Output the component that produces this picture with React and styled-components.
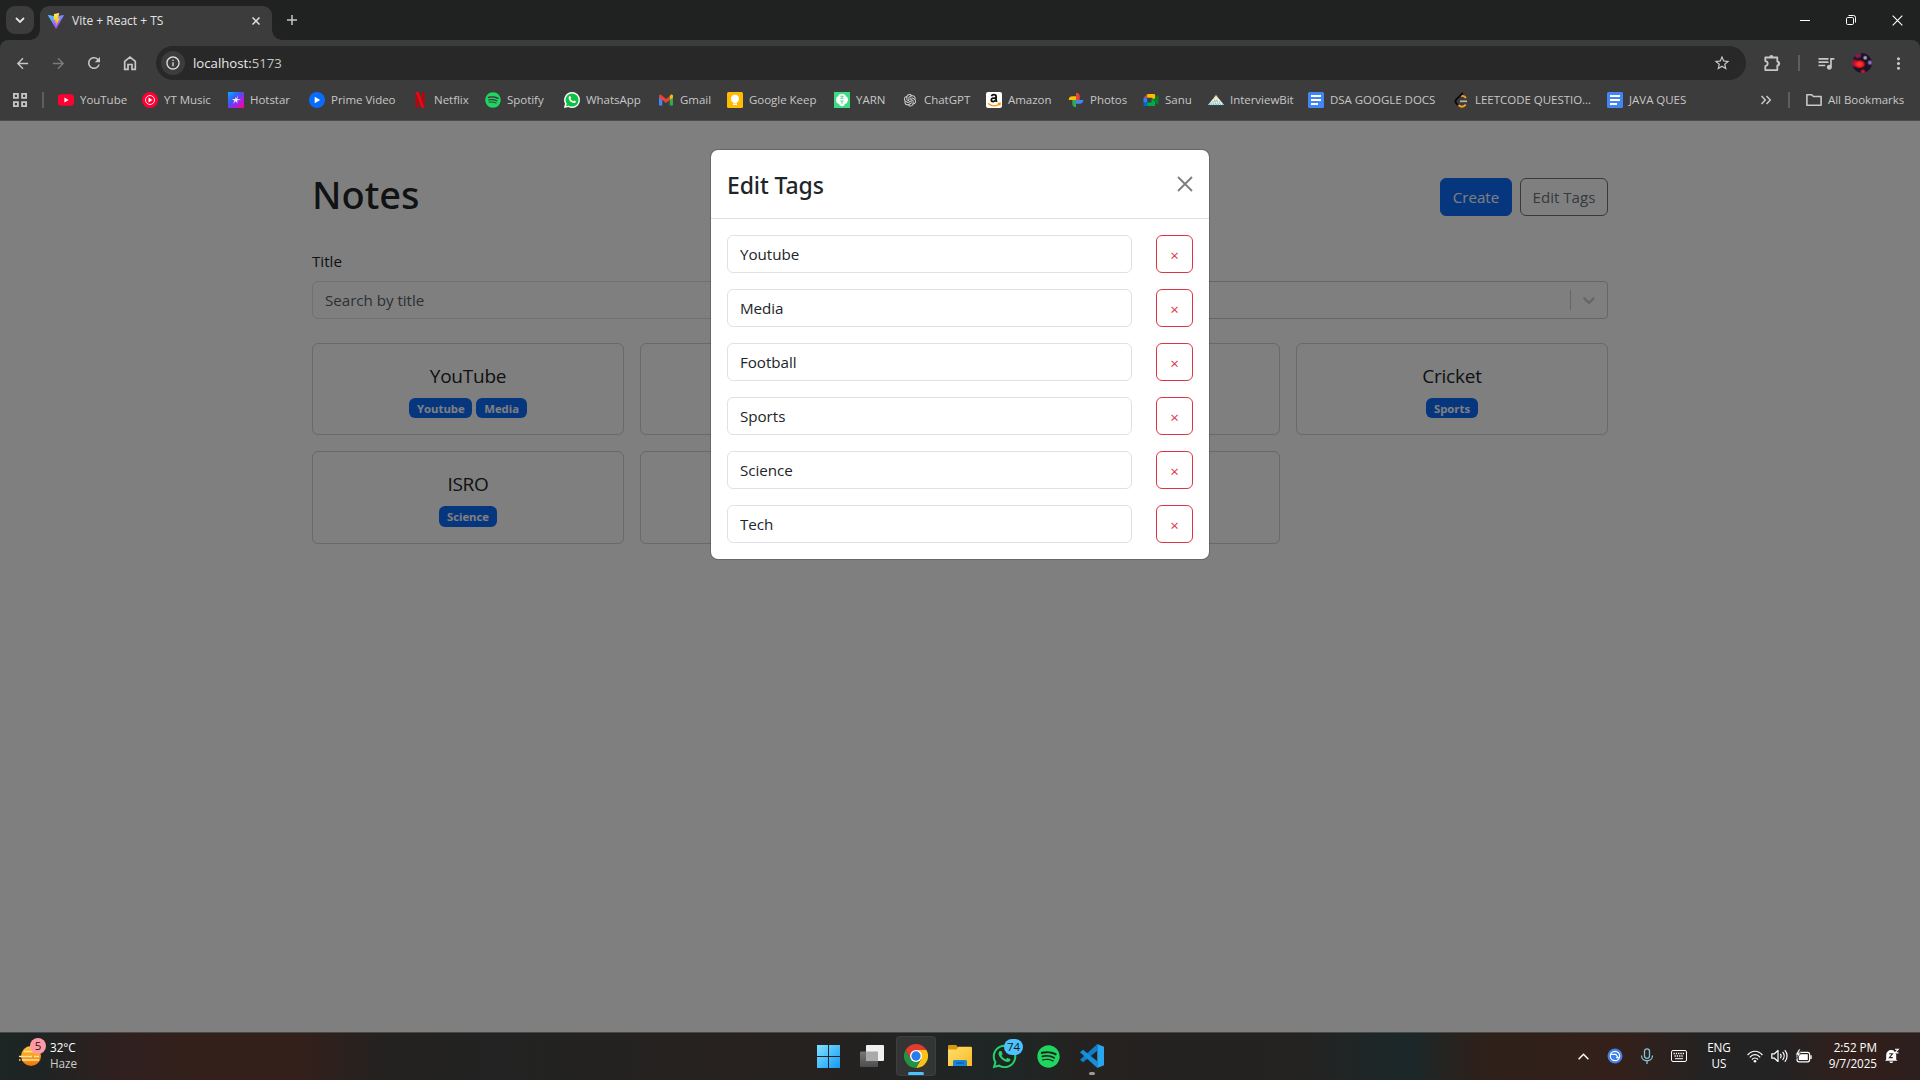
import React from 'react';
import styled, { createGlobalStyle, css } from 'styled-components';
import {
  MdArrowBack, MdArrowForward, MdRefresh, MdInfoOutline, MdStarBorder,
  MdQueueMusic, MdMoreVert,
} from 'react-icons/md';
import { FaSpotify, FaWhatsapp } from 'react-icons/fa';
import { AiOutlineOpenAI } from 'react-icons/ai';

const GlobalStyle = createGlobalStyle`
  * { box-sizing: border-box; }
  html, body { margin: 0; padding: 0; background: #202221; }
  body {
    overflow: hidden;
    font-family: "Open Sans", "Noto Sans", sans-serif;
    color: #212529;
  }
  svg { display: block; flex: none; }
  button, input { font-family: inherit; margin: 0; }
`;

const Screen = styled.div`
  width: 1920px;
  height: 1080px;
  display: flex;
  flex-direction: column;
  overflow: hidden;
`;

/* ---------- browser chrome ---------- */

const TabStrip = styled.header`
  height: 40px;
  flex: none;
  display: flex;
  align-items: flex-end;
  background: #202221;
  padding-left: 6px;
`;

const TabSearch = styled.button`
  width: 28px;
  height: 28px;
  margin-bottom: 6px;
  border: 0;
  padding: 0;
  border-radius: 9px;
  background: #3c3c3c;
  display: grid;
  place-items: center;
`;

const Tab = styled.div`
  position: relative;
  width: 232px;
  height: 34px;
  margin-left: 6px;
  padding: 0 12px 5px 8px;
  display: flex;
  align-items: center;
  background: #3c3c3c;
  border-radius: 9px 9px 0 0;
  &::before, &::after {
    content: "";
    position: absolute;
    bottom: 0;
    width: 10px;
    height: 10px;
  }
  &::before {
    left: -10px;
    background: radial-gradient(circle at 0 0, transparent 9.5px, #3c3c3c 10px);
  }
  &::after {
    right: -10px;
    background: radial-gradient(circle at 100% 0, transparent 9.5px, #3c3c3c 10px);
  }
`;

const TabTitle = styled.span`
  flex: 1;
  margin-left: 8px;
  font-size: 12px;
  line-height: 16px;
  color: #e3e3e3;
`;

const NewTab = styled.div`
  width: 28px;
  height: 40px;
  margin-left: 6px;
  display: grid;
  place-items: center;
`;

const WindowControls = styled.div`
  margin-left: auto;
  height: 40px;
  display: flex;
  svg { margin: auto; }
`;

const ControlButton = styled.div`
  width: 46px;
  display: flex;
`;

const ChromePanel = styled.section`
  height: 81px;
  flex: none;
  background: #3c3c3c;
  border-radius: 8px 8px 0 0;
  border-bottom: 1px solid #4c4c4c;
  display: flex;
  flex-direction: column;
`;

const Toolbar = styled.div`
  height: 46px;
  display: flex;
  align-items: center;
  padding: 0 4px;
  color: #c7c7c7;
`;

const ToolButton = styled.div`
  width: 36px;
  height: 34px;
  display: grid;
  place-items: center;
  color: ${(p) => (p.$dim ? '#7b7b7b' : '#c7c7c7')};
`;

const Omnibox = styled.div`
  width: 1590px;
  height: 34px;
  margin-left: 8px;
  padding: 0 15px 0 5px;
  display: flex;
  align-items: center;
  border-radius: 17px;
  background: #282828;
`;

const SiteInfo = styled.span`
  width: 24px;
  height: 24px;
  border-radius: 50%;
  background: #3c3c3c;
  display: grid;
  place-items: center;
`;

const Url = styled.span`
  flex: 1;
  margin-left: 8px;
  font-size: 13.2px;
  line-height: 20px;
  color: #e8e8e8;
  em { font-style: normal; color: #c4c4c4; }
`;

const ToolbarActions = styled.div`
  margin-left: 8px;
  display: flex;
  align-items: center;
`;

const Rule = styled.span`
  width: 2px;
  height: 16px;
  background: #5e5e5e;
  margin: 0 ${(p) => p.$after}px 0 ${(p) => p.$before}px;
`;

const Avatar = styled.span`
  width: 20px;
  height: 20px;
  border-radius: 50%;
  margin: 0 8px;
  background:
    radial-gradient(ellipse 6px 4.500px at 38% 56%, #ff4a30 0, #f0141c 65%, transparent 100%),
    radial-gradient(circle at 66% 24%, #a99bb8 0 1px, transparent 2.5px),
    radial-gradient(circle at 90% 48%, #8b6fc0 0 1px, transparent 3px),
    radial-gradient(circle at 55% 94%, #d41b2c 0 1px, transparent 3px),
    radial-gradient(circle at 30% 10%, #8a1c4c 0 2px, transparent 4px),
    radial-gradient(circle at 10% 50%, #a01838 0 2px, transparent 5px),
    #1e1228;
`;

const BookmarkBar = styled.nav`
  height: 28px;
  display: flex;
  align-items: center;
  padding-left: 12px;
`;

const Bookmark = styled.div`
  width: ${(p) => p.$width}px;
  display: flex;
  align-items: center;
  gap: 6px;
`;

const BookmarkLabel = styled.span`
  font-size: 11.5px;
  line-height: 16px;
  letter-spacing: -0.03px;
  white-space: nowrap;
  color: #c7c7c7;
`;

const IconBox = styled.span`
  width: 16px;
  height: 16px;
  flex: none;
  display: grid;
  place-items: center;
  border-radius: ${(p) => p.$radius || 0}px;
  background: ${(p) => p.$bg || 'transparent'};
`;

/* ---------- notes page ---------- */

const Page = styled.main`
  position: relative;
  flex: 1;
  background: #fff;
  padding: 48px 312px 0;
`;

const PageHeader = styled.div`
  height: 56px;
  display: flex;
  align-items: center;
  justify-content: space-between;
`;

const Heading = styled.h1`
  margin: 0 0 6px;
  font-family: "Noto Sans", sans-serif;
  font-size: 38px;
  font-weight: 500;
  line-height: 48px;
`;

const HeaderButtons = styled.div`
  display: flex;
  gap: 8px;
`;

const Button = styled.button`
  width: ${(p) => p.$width}px;
  height: 38px;
  padding: 0;
  border-radius: 6px;
  font-size: 15.1px;
  line-height: 24px;
  white-space: nowrap;
  ${(p) => p.$kind === 'primary' && css`
    background: #0d6efd; border: 1px solid #0d6efd; color: #fff;
  `}
  ${(p) => p.$kind === 'secondary' && css`
    background: transparent; border: 1px solid #6c757d; color: #6c757d;
  `}
  ${(p) => p.$kind === 'danger' && css`
    background: transparent; border: 1px solid #dc3545; color: #dc3545;
    padding-top: 2px;
  `}
`;

const Filters = styled.div`
  margin-top: 24px;
  display: grid;
  grid-template-columns: 640px 640px;
  gap: 16px;
  align-items: end;
`;

const FieldLabel = styled.label`
  display: block;
  margin-bottom: 8px;
  font-size: 15.2px;
  line-height: 24px;
`;

const TextInput = styled.input`
  display: block;
  width: 100%;
  height: 38px;
  padding: 0 12px;
  border: 1px solid #dee2e6;
  border-radius: 6px;
  background: #fff;
  font-size: 15.2px;
  letter-spacing: -0.05px;
  color: #212529;
  outline: 0;
  &::placeholder { color: #595f64; opacity: 1; }
`;

const Select = styled.div`
  height: 38px;
  border: 1px solid #ccc;
  border-radius: 4px;
  display: flex;
  align-items: center;
  justify-content: flex-end;
`;

const SelectSeparator = styled.span`
  width: 1px;
  height: 20px;
  background: #ccc;
`;

const SelectArrow = styled.span`
  width: 36px;
  display: grid;
  place-items: center;
`;

const CardGrid = styled.div`
  margin-top: 24px;
  display: grid;
  grid-template-columns: repeat(4, 312px);
  gap: 16px;
`;

const Card = styled.article`
  height: 92.4px;
  border: 1px solid rgba(0, 0, 0, 0.175);
  border-radius: 6px;
  padding: 17px 16px 16px;
  display: flex;
  flex-direction: column;
  align-items: center;
  gap: 7px;
`;

const CardTitle = styled.span`
  font-size: 19px;
  line-height: 30px;
  letter-spacing: -0.25px;
`;

const Badges = styled.div`
  display: flex;
  gap: 4px;
`;

const Badge = styled.span`
  height: 20.4px;
  padding: 4.6px 7.8px 4px;
  border-radius: 6px;
  background: #0d6efd;
  color: #fff;
  font-size: 11.3px;
  font-weight: 700;
  line-height: 12px;
`;

const Backdrop = styled.div`
  position: absolute;
  inset: 0;
  background: rgba(0, 0, 0, 0.5);
  display: flex;
  justify-content: center;
  align-items: flex-start;
  padding-top: 28px;
`;

const Dialog = styled.section`
  width: 500px;
  border: 1px solid rgba(0, 0, 0, 0.175);
  border-radius: 8px;
  background: #fff;
  background-clip: padding-box;
`;

const DialogHeader = styled.div`
  height: 69px;
  padding: 2px 16px 0;
  display: flex;
  align-items: center;
  justify-content: space-between;
  border-bottom: 1px solid #dee2e6;
  svg { margin-top: -3px; }
`;

const DialogTitle = styled.h2`
  margin: 0;
  font-family: "Noto Sans", sans-serif;
  font-size: 23px;
  font-weight: 500;
  line-height: 36px;
  letter-spacing: -0.1px;
`;

const DialogBody = styled.div`
  padding: 16px;
  display: flex;
  flex-direction: column;
  gap: 16px;
`;

const TagRow = styled.div`
  display: grid;
  grid-template-columns: 405px 37px;
  gap: 24px;
`;

/* ---------- taskbar ---------- */

const Taskbar = styled.footer`
  height: 48px;
  flex: none;
  border-top: 1px solid #484847;
  padding-bottom: 1px;
  display: grid;
  grid-template-columns: 1fr 306px 1fr;
  background: linear-gradient(90deg,
    #1d2525 0, #1f2424 40px, #2f2020 110px, #33201a 200px, #33201a 300px,
    #242221 380px, #222322 500px, #272220 740px, #242221 860px, #1e2726 1000px,
    #252220 1090px, #242322 1300px, #1b2829 1410px, #2e201a 1480px,
    #34201a 1620px, #232323 1710px, #242323 1780px, #321f1b 1850px, #2c1f1e 1920px);
  color: #fff;
`;

const Weather = styled.div`
  display: flex;
  align-items: center;
  padding-left: 19px;
`;

const WeatherIcon = styled.div`
  position: relative;
  width: 24px;
  height: 24px;
  margin-right: 7px;
`;

const CountBadge = styled.span`
  position: absolute;
  top: ${(p) => p.$top}px;
  left: ${(p) => p.$left}px;
  min-width: 16px;
  height: 16px;
  padding: 0 ${(p) => p.$pad || 0}px;
  border-radius: 8px;
  background: ${(p) => p.$bg};
  color: #1a1a1a;
  font-size: 11.5px;
  line-height: 16px;
  text-align: center;
`;

const TwoLines = styled.div`
  display: flex;
  flex-direction: column;
  margin-bottom: 2px;
  text-align: ${(p) => p.$align || 'left'};
  font-size: 11.7px;
  line-height: 16px;
  white-space: nowrap;
  letter-spacing: -0.05px;
`;

const Muted = styled.span`
  color: #cfcccb;
`;

const Apps = styled.div`
  display: flex;
  align-items: center;
  gap: 4px;
  padding-left: 1px;
`;

const AppButton = styled.div`
  position: relative;
  width: 40px;
  height: 40px;
  border-radius: 4px;
  display: grid;
  place-items: center;
  ${(p) => p.$active && css`
    background: rgba(255, 255, 255, 0.08);
    box-shadow: inset 0 0 0 1px rgba(255, 255, 255, 0.05);
  `}
`;

const Indicator = styled.span`
  position: absolute;
  bottom: 1px;
  left: 50%;
  transform: translateX(-50%);
  width: ${(p) => (p.$active ? 16 : 6)}px;
  height: 3px;
  border-radius: 2px;
  background: ${(p) => (p.$active ? '#4cc2ff' : '#9a9a9a')};
`;

const Tray = styled.div`
  display: flex;
  align-items: center;
  justify-content: flex-end;
  padding-right: 20px;
`;

const TrayIcon = styled.span`
  width: ${(p) => p.$width}px;
  display: grid;
  place-items: center;
`;

const Clock = styled.div`
  width: 66px;
  padding-right: 7px;
`;

const Language = styled.div`
  width: 42px;
  margin-left: 3px;
`;

/* ---------- drawings ---------- */

const ViteLogo = () => (
  <svg width="16" height="16" viewBox="0 0 32 32">
    <defs>
      <linearGradient id="va" x1="0" y1="0" x2="0.6" y2="1"><stop offset="0" stopColor="#41d1ff" /><stop offset="1" stopColor="#bd34fe" /></linearGradient>
      <linearGradient id="vb" x1="0.5" y1="0" x2="0.5" y2="1"><stop offset="0" stopColor="#ffea83" /><stop offset="0.3" stopColor="#ffdd35" /><stop offset="1" stopColor="#ffa800" /></linearGradient>
    </defs>
    <path d="M31.5 5.6 17 31a1 1 0 0 1-1.6 0L.3 5.6a1 1 0 0 1 1-1.4L16 6.8l14.500-2.600a1 1 0 0 1 1 1.400Z" fill="url(#va)" />
    <path d="M22.700 0 12 2.100 11.200 14.500l4-.9-1.200 5.900 3-.9-1.500 8 8.500-16.500-4.500.8Z" fill="url(#vb)" />
  </svg>
);

const Cross = ({ size, color, width }) => (
  <svg width={size} height={size} viewBox="0 0 16 16" stroke={color} strokeWidth={width} fill="none">
    <path d="M1 1 15 15M15 1 1 15" />
  </svg>
);

const HomeIcon = () => (
  <svg width="16" height="16" viewBox="0 0 16 16" fill="none" stroke="#c7c7c7" strokeWidth="1.700">
    <path d="M2.700 6.300 8 2l5.300 4.300v8H10V9.500H6v4.800H2.700Z" />
  </svg>
);

const PuzzleIcon = () => (
  <svg width="18" height="18" viewBox="0 0 18 18">
    <path d="M2.300 3.500h12v4a1.900 1.900 0 0 1 0 4v4.600h-12v-4c3.200-.4 3.200-4.600 0-5Z" fill="none" stroke="#c7c7c7" strokeWidth="1.800" strokeLinejoin="round" />
    <path d="M6.300 3a2 2 0 0 1 4 0ZM14.800 7.500a2 2 0 0 1 0 4Z" fill="#c7c7c7" />
  </svg>
);

const AppsIcon = () => (
  <svg width="16" height="16" viewBox="0 0 16 16" fill="none" stroke="#c7c7c7" strokeWidth="1.800">
    <path d="M1.900 1.900h4v4h-4zM10.100 1.900h4v4h-4zM1.900 10.100h4v4h-4zM10.100 10.100h4v4h-4z" />
  </svg>
);

const YouTubeIcon = () => (
  <svg width="16" height="16" viewBox="0 0 16 16"><rect y="2.300" width="16" height="11.400" rx="3" fill="#ff0033" /><path d="M6.400 5.600v4.800L10.600 8Z" fill="#fff" /></svg>
);
const YTMusicIcon = () => (
  <svg width="16" height="16" viewBox="0 0 16 16"><circle cx="8" cy="8" r="8" fill="#ff0033" /><circle cx="8" cy="8" r="4.500" fill="none" stroke="#fff" strokeWidth=".9" /><path d="M6.500 5.500v5L10.500 8Z" fill="#fff" /></svg>
);
const HotstarIcon = () => (
  <svg width="16" height="16" viewBox="0 0 16 16">
    <defs><linearGradient id="hs" x1="0" y1="0" x2="1" y2="1"><stop offset="0" stopColor="#08b0ff" /><stop offset=".4" stopColor="#3d55f5" /><stop offset=".7" stopColor="#b41be0" /><stop offset="1" stopColor="#ff0080" /></linearGradient></defs>
    <path d="M0 0h16v16H0z" fill="url(#hs)" />
    <path d="M10.500 2.500 9.200 6.900l3.900.8-4.100.7.500 3.200-2-2.300-2.400 2.500 1.300-3.200-2.800-1.400 3.400-.1.800-2.200.7 1.700Z" fill="#eef" />
  </svg>
);
const PrimeIcon = () => (
  <svg width="16" height="16" viewBox="0 0 16 16"><circle cx="8" cy="8" r="8" fill="#0a6cff" /><path d="M5.700 4.700v6.600L11.200 8Z" fill="#fff" /></svg>
);
const NetflixIcon = () => (
  <svg width="16" height="16" viewBox="0 0 16 16"><path d="M3.500 0h3.200v15.700l-3.200.3ZM9.700 0h3v16l-3-.5Z" fill="#b20710" /><path d="M3.500 0h3.200l6 16-3.200-.4Z" fill="#e50914" /></svg>
);
const WhatsAppMark = () => (
  <svg width="16" height="16" viewBox="0 0 16 16">
    <path d="M8 0a8 8 0 0 1 0 16 8.200 8.200 0 0 1-3.700-.9L0 16l1-4.200A8 8 0 0 1 8 0Z" fill="#fff" />
    <path d="M8 1.400A6.600 6.600 0 0 1 8 14.600a6.700 6.700 0 0 1-3.300-.9l-2.600.6.700-2.500A6.600 6.600 0 0 1 8 1.400Z" fill="#0fc143" />
    <path d="M5.500 4.200c.6-.4 1 0 1.500 1.500.1.500-.5.900-.5 1.100.6 1.200 1.500 1.900 2.600 2.400.4 0 .7-.9 1.100-.8l1.600.8c.2.600-.3 1.800-1.600 1.900C7.500 11 4.800 8.400 4.600 6c0-.8.400-1.400.9-1.800Z" fill="#fff" />
  </svg>
);
const GmailIcon = () => (
  <svg width="16" height="16" viewBox="0 0 16 16">
    <path d="M1 4.500v9h3.300V7Z" fill="#4285f4" /><path d="M15 4.500v9h-3.300V7Z" fill="#34a853" />
    <path d="M11.700 4.300v3.700l3.300-2.500V4c0-1.400-1.400-1.900-2.300-1.200Z" fill="#fbbc04" />
    <path d="M1 5.500 4 7.800 8 10.900l3.700-2.900V4.300L8 7 3.300 3.100C2.400 2.400 1 2.800 1 4Z" fill="#ea4335" />
  </svg>
);
const KeepIcon = () => (
  <svg width="16" height="16" viewBox="0 0 16 16"><rect width="16" height="16" rx="1.500" fill="#ffbb00" /><circle cx="8" cy="6.700" r="4" fill="#fff" /><path d="M6 9h4v1.800H6zM6 11.600h4V13H6z" fill="#fff" /></svg>
);
const YarnIcon = () => (
  <svg width="16" height="16" viewBox="0 0 16 16"><path d="M0 0h16v16H0z" fill="#3ddc84" /><path d="M5 2.500 8 2l3 .6.600 1.500 2 1.400.4 2.800-1.200 3-2 .8-.8 1.700-2 .4-2-.5-1-1.800-2-.8L2 8.500l.4-3L4.300 4Z" fill="#fff" /><path d="M6.300 4.200h3.400M6.300 6.300h3.400M6.300 9h3.400M8 4v2.500M8 9v3" stroke="#3ddc84" fill="none" strokeWidth=".9" /></svg>
);
const AmazonMark = () => (
  <svg width="16" height="16" viewBox="0 0 16 16" fill="none">
    <path d="M5.500 4.200c.5-2.200 4.600-2.200 4.600.2v4.200l.9 1.200M10 5.800c-3-.1-4.800.6-4.700 2.300.1 1.900 3.200 2 4.700-.3" stroke="#111" strokeWidth="1.800" />
    <path d="M2 11.500c3.500 3 8.500 3 11.500.6M11.700 11.300l2.500-.2-.4 2.400" stroke="#ff9900" strokeWidth="1.300" />
  </svg>
);
const PhotosIcon = () => (
  <svg width="16" height="16" viewBox="0 0 16 16"><path d="M8 .7a3.700 3.700 0 0 1 3.700 3.700V8H8Z" fill="#ea4335" /><path d="M15.300 8a3.700 3.700 0 0 1-3.700 3.700H8V8Z" fill="#4285f4" /><path d="M8 15.300a3.700 3.700 0 0 1-3.700-3.700V8H8Z" fill="#34a853" /><path d="M.7 8a3.700 3.700 0 0 1 3.700-3.700H8V8Z" fill="#fbbc04" /></svg>
);
const MeetIcon = () => (
  <svg width="16" height="16" viewBox="0 0 16 16"><path d="M4.200 2v3.800H.5Z" fill="#ea4335" /><path d="M.5 5.800h3.700v4.800H.5Z" fill="#2684fc" /><path d="M.5 10.600h3.700V14H1.700A1.200 1.200 0 0 1 .5 12.800Z" fill="#0066da" /><path d="M4.200 2h6.800a1.200 1.200 0 0 1 1.200 1.200V8L8.500 5.800H4.200Z" fill="#ffba00" /><path d="M4.200 10.600h4.300V7l3.700 1v4.800A1.200 1.200 0 0 1 11 14H4.200Z" fill="#00ac47" /><path d="m10 8 4.500-4.500c.4-.3 1-.1 1 .5v8c0 .6-.6.8-1 .5Z" fill="#00832d" /></svg>
);
const InterviewBitIcon = () => (
  <svg width="16" height="16" viewBox="0 0 16 16"><path d="M8 3 16 13H0Z" fill="#e8f6f6" /><path d="M5.200 7.200 8 4.300l2.800 2.900M4 9.600h8" stroke="#ff9f43" fill="none" strokeDasharray="1.500 .8" /><path d="M6 8.200h4M2.500 11.200h11M1 12.700h14" stroke="#35b8c0" strokeDasharray="1.200 1" /></svg>
);
const DocsIcon = () => (
  <svg width="16" height="16" viewBox="0 0 16 16"><rect width="16" height="16" rx="1.500" fill="#4285f4" /><path d="M3 4h10M3 8h10M3 12h7" stroke="#fff" strokeWidth="1.800" /></svg>
);
const LeetIcon = () => (
  <svg width="16" height="16" viewBox="0 0 16 16" fill="none" strokeWidth="1.900">
    <path d="M8 4.300c1.700-1 3.200-.4 5 1.600" stroke="#ffa116" />
    <path d="M5 12.600c2.600 2.900 5.300 2.700 7.800.1" stroke="#ffa116" />
    <path d="M9.800.8 3.200 7.600c-1 1.100-1 2.500 0 3.600L5.300 13.300" stroke="#0b0b0b" />
    <path d="M7 9.300h7" stroke="#b3b3b3" strokeWidth="1.700" />
  </svg>
);
const FolderIcon = () => (
  <svg width="16" height="14" viewBox="0 0 16 14" fill="none" stroke="#c7c7c7" strokeWidth="1.600" strokeLinejoin="round"><path d="M.9 1.700h4.800l1.700 1.800h7.700v8.800H.9Z" /></svg>
);

const Chevron = ({ size = 12, width = 2, color = '#e3e3e3', up }) => (
  <svg width={size} height={size} viewBox="0 0 12 12" fill="none" stroke={color} strokeWidth={width}>
    <path d={up ? 'M1.500 8.500 6 4l4.500 4.500' : 'M2 4l4 4 4-4'} />
  </svg>
);

const SunIcon = () => (
  <svg width="24" height="24" viewBox="0 0 24 24">
    <defs><linearGradient id="sun" x1="0" y1="0" x2="0" y2="1"><stop offset="0" stopColor="#ffc933" /><stop offset="1" stopColor="#f2740b" /></linearGradient></defs>
    <circle cx="12" cy="12" r="10" fill="url(#sun)" />
    <path d="M5 7.500h11M0 12.500h13M15 12.500h5M3 16h17M0 16h1.500" stroke="#ffe3a0" strokeWidth="1.600" />
  </svg>
);
const WindowsIcon = () => (
  <svg width="23" height="23" viewBox="0 0 23 23"><defs><linearGradient id="win" x1="0" y1="0" x2="1" y2="1"><stop offset="0" stopColor="#7fe3ff" /><stop offset="1" stopColor="#1499f5" /></linearGradient></defs><path d="M0 0h11v11H0zM12 0h11v11H12zM0 12h11v11H0zM12 12h11v11H12z" fill="url(#win)" /></svg>
);
const TaskViewIcon = () => (
  <svg width="24" height="22" viewBox="0 0 24 22"><defs><linearGradient id="tv" x1="0" y1="0" x2="0" y2="1"><stop offset="0" stopColor="#787878" /><stop offset="1" stopColor="#4d4d4d" /></linearGradient></defs><rect y="6.500" width="18" height="15.500" rx="1" fill="url(#tv)" /><rect x="6" y="0" width="18" height="16" rx="1" fill="#f1f0f1" /><path d="M6 6.500h12V16H6Z" fill="#a9a9a9" /></svg>
);
const ChromeIcon = () => (
  <svg width="24" height="24" viewBox="0 0 48 48">
    <path d="M24 12h20.800A24 24 0 0 1 24 48L34.400 30Z" fill="#fbc116" />
    <path d="M13.600 30 3.200 12A24 24 0 0 0 24 48l10.400-18Z" fill="#229342" />
    <path d="M3.200 12A24 24 0 0 1 44.800 12H24L13.600 30Z" fill="#e33b2e" />
    <circle cx="24" cy="24" r="12" fill="#fff" /><circle cx="24" cy="24" r="9.300" fill="#2a7bea" />
  </svg>
);
const ExplorerIcon = () => (
  <svg width="24" height="22" viewBox="0 0 24 22"><defs><linearGradient id="ex" x1="0" y1="0" x2="1" y2="1"><stop offset="0" stopColor="#ffdf72" /><stop offset="1" stopColor="#fabb21" /></linearGradient></defs><path d="M0 5V1.300C0 .6.500 0 1.300 0H8l2.500 2.500v4H0Z" fill="#d89a0c" /><path d="M0 4.500h8.500l2-2.800h12.300c.7 0 1.200.5 1.200 1.200V21H0Z" fill="url(#ex)" /><path d="M5 21v-4.300c0-1 .7-1.700 1.700-1.700h10.600c1 0 1.700.7 1.700 1.700V21Z" fill="#1787d8" /><path d="M8 18h8" stroke="#0b5ea8" strokeWidth="1.400" /></svg>
);
const VSCodeIcon = () => (
  <svg width="24" height="24" viewBox="0 0 24 24"><path d="M17.300 0 24 2.800v18.400L17.300 24Z" fill="#2aa5ee" /><path d="M17.300 0v6.800L3 18.300l-3-2.600L17.300 0Z" fill="#0f7fca" /><path d="M17.300 24v-6.800L3 5.700 0 8.300 17.300 24Z" fill="#1590dc" /></svg>
);

const SyncIcon = () => (
  <svg width="16" height="16" viewBox="0 0 16 16"><circle cx="8" cy="8" r="7.500" fill="#3f7fe8" /><g fill="none" stroke="#fff" strokeWidth="1.200"><circle cx="8" cy="8" r="4.700" /><path d="M3.500 6.300h5.200l2.500 3.400h-2" /></g></svg>
);
const MicIcon = () => (
  <svg width="14" height="17" viewBox="0 0 14 17" fill="none" stroke="#84c3d4" strokeWidth="1.300"><rect x="4.500" y=".8" width="5" height="9.500" rx="2.500" /><path d="M1.500 7.500c0 7 11 7 11 0M7 12.800V16" /></svg>
);
const KeyboardIcon = () => (
  <svg width="16" height="12" viewBox="0 0 16 12" fill="none" stroke="#fff"><rect x=".5" y=".5" width="15" height="11" rx="1.500" /><path d="M2.500 3.500h11M3.500 6h9" strokeWidth="1.300" strokeDasharray="1.300 1" /><path d="M4 8.700h8" /></svg>
);
const WifiIcon = () => (
  <svg width="16" height="13" viewBox="0 0 16 13" fill="none" stroke="#fff" strokeWidth="1.200"><path d="M.6 5c4.200-5 10.600-5 14.800 0M2.800 7.300c3-3.600 7.400-3.600 10.400 0M5 9.500c1.700-2 4.300-2 6 0" /><circle cx="8" cy="11.200" r="1.300" fill="#fff" stroke="none" /></svg>
);
const SpeakerIcon = () => (
  <svg width="17" height="14" viewBox="0 0 17 14" fill="none" stroke="#fff" strokeWidth="1.200" strokeLinejoin="round"><path d="M.8 4.800h2.600L7 1.500v11L3.400 9.200H.8ZM9.300 4.800c1 1.300 1 3.100 0 4.400M11.600 3c2 2.300 2 5.700 0 8M13.800 1.200c3 3.300 3 8.300 0 11.600" /></svg>
);
const BatteryIcon = () => (
  <svg width="17" height="14" viewBox="0 0 17 14"><rect x="2" y="3.400" width="12.600" height="9.400" rx="2" fill="none" stroke="#fff" strokeWidth="1.200" /><path d="M3.800 11V5.200h9V11Z" fill="#fff" /><path d="M15.300 6.300h1.400v3.600h-1.400Z" fill="#fff" /><path d="M3.800 0 .3 5.900h2.200L1.500 9.700 6 4H3.700L5.700 0Z" fill="#fff" stroke="#232323" strokeWidth=".7" /></svg>
);
const BellIcon = () => (
  <svg width="16" height="16" viewBox="0 0 16 16"><path d="M2.200 11.500V7a5 5 0 0 1 10 0v4.500l1.300 1.300H1ZM5.300 13.500h3.900a2 2 0 0 1-3.900 0Z" fill="#fff" /><path d="M5.200 5.800h3.300L5.400 9.600h3.400" fill="none" stroke="#2c1f1e" strokeWidth="1.100" /><path d="M9.500.5h6v5.300h-4Z" fill="#2c1f1e" /><path d="M11 1.200h3.300l-3.300 3.700h3.500" fill="none" stroke="#fff" strokeWidth="1.100" /></svg>
);

/* ---------- data ---------- */

const bookmarks = [
  ['YouTube', 84, <YouTubeIcon />],
  ['YT Music', 86, <YTMusicIcon />],
  ['Hotstar', 81, <HotstarIcon />],
  ['Prime Video', 103, <PrimeIcon />],
  ['Netflix', 73, <NetflixIcon />],
  ['Spotify', 79, <FaSpotify size={16} color="#1ed760" />],
  ['WhatsApp', 94, <WhatsAppMark />],
  ['Gmail', 69, <GmailIcon />],
  ['Google Keep', 107, <KeepIcon />],
  ['YARN', 68, <YarnIcon />],
  ['ChatGPT', 84, <AiOutlineOpenAI size={16} color="#d0d0d0" />],
  ['Amazon', 82, <IconBox $bg="#fff" $radius={2}><AmazonMark /></IconBox>],
  ['Photos', 75, <PhotosIcon />],
  ['Sanu', 65, <MeetIcon />],
  ['InterviewBit', 100, <InterviewBitIcon />],
  ['DSA GOOGLE DOCS', 145, <DocsIcon />],
  ['LEETCODE QUESTIO...', 154, <LeetIcon />],
  ['JAVA QUES', 153, <DocsIcon />],
];

const cards = [
  { title: 'YouTube', tags: ['Youtube', 'Media'] },
  {}, {},
  { title: 'Cricket', tags: ['Sports'] },
  { title: 'ISRO', tags: ['Science'] },
  {}, {},
];

const tags = ['Youtube', 'Media', 'Football', 'Sports', 'Science', 'Tech'];

/* ---------- app ---------- */

function Browser() {
  return (
    <>
      <TabStrip>
        <TabSearch><Chevron size={12} width={1.800} /></TabSearch>
        <Tab>
          <ViteLogo />
          <TabTitle>Vite + React + TS</TabTitle>
          <Cross size={8} color="#e3e3e3" width={3} />
        </Tab>
        <NewTab>
          <svg width="10" height="10" viewBox="0 0 10 10" stroke="#c7c7c7" strokeWidth="1.500"><path d="M5 0v10M0 5h10" /></svg>
        </NewTab>
        <WindowControls>
          <ControlButton><svg width="10" height="10" viewBox="0 0 10 10" stroke="#fff"><path d="M0 5.500h10" /></svg></ControlButton>
          <ControlButton><svg width="10" height="10" viewBox="0 0 10 10" stroke="#fff" fill="none"><rect x=".5" y="2.500" width="7" height="7" rx="1.200" /><path d="M2.500.5h5a2 2 0 0 1 2 2v5" /></svg></ControlButton>
          <ControlButton><Cross size={11} color="#fff" width={1.600} /></ControlButton>
        </WindowControls>
      </TabStrip>
      <ChromePanel>
        <Toolbar>
          <ToolButton><MdArrowBack size={17} /></ToolButton>
          <ToolButton $dim><MdArrowForward size={17} /></ToolButton>
          <ToolButton><MdRefresh size={18} /></ToolButton>
          <ToolButton><HomeIcon /></ToolButton>
          <Omnibox>
            <SiteInfo><MdInfoOutline size={16} color="#dedede" /></SiteInfo>
            <Url>localhost:<em>5173</em></Url>
            <MdStarBorder size={18} color="#c7c7c7" />
          </Omnibox>
          <ToolbarActions>
            <ToolButton><PuzzleIcon /></ToolButton>
            <Rule $before={8} $after={8} />
            <ToolButton><MdQueueMusic size={20} /></ToolButton>
            <Avatar />
            <ToolButton><MdMoreVert size={19} /></ToolButton>
          </ToolbarActions>
        </Toolbar>
        <BookmarkBar>
          <AppsIcon />
          <Rule $before={14} $after={14} />
          {bookmarks.map(([name, width, icon]) => (
            <Bookmark key={name} $width={width}>
              {icon}
              <BookmarkLabel>{name}</BookmarkLabel>
            </Bookmark>
          ))}
          <svg width="12" height="10" viewBox="0 0 12 10" fill="none" stroke="#c7c7c7" strokeWidth="1.500"><path d="M1.500 1 5.300 5 1.500 9M6.500 1l3.800 4-3.800 4" /></svg>
          <Rule $before={16} $after={16} />
          <Bookmark $width={104}>
            <FolderIcon />
            <BookmarkLabel>All Bookmarks</BookmarkLabel>
          </Bookmark>
        </BookmarkBar>
      </ChromePanel>
    </>
  );
}

function EditTagsDialog() {
  return (
    <Backdrop>
      <Dialog>
        <DialogHeader>
          <DialogTitle>Edit Tags</DialogTitle>
          <Cross size={16} color="#7f7f7f" width={1.900} />
        </DialogHeader>
        <DialogBody>
          {tags.map((tag) => (
            <TagRow key={tag}>
              <TextInput defaultValue={tag} />
              <Button $kind="danger" $width={37}>×</Button>
            </TagRow>
          ))}
        </DialogBody>
      </Dialog>
    </Backdrop>
  );
}

function NotesPage() {
  return (
    <Page>
      <PageHeader>
        <Heading>Notes</Heading>
        <HeaderButtons>
          <Button $kind="primary" $width={72}>Create</Button>
          <Button $kind="secondary" $width={88}>Edit Tags</Button>
        </HeaderButtons>
      </PageHeader>
      <Filters>
        <div>
          <FieldLabel>Title</FieldLabel>
          <TextInput placeholder="Search by title" />
        </div>
        <Select>
          <SelectSeparator />
          <SelectArrow>
            <svg width="20" height="20" viewBox="0 0 20 20" fill="#ccc"><path d="M4.516 7.548c.436-.446 1.043-.481 1.576 0L10 11.295l3.908-3.747c.533-.481 1.141-.446 1.574 0 .436.445.408 1.197 0 1.615-.406.418-4.695 4.502-4.695 4.502a1.095 1.095 0 0 1-1.576 0S4.924 9.581 4.516 9.163s-.436-1.170 0-1.615z" /></svg>
          </SelectArrow>
        </Select>
      </Filters>
      <CardGrid>
        {cards.map((card, i) => (
          <Card key={i}>
            {card.title && <CardTitle>{card.title}</CardTitle>}
            {card.tags && <Badges>{card.tags.map((t) => <Badge key={t}>{t}</Badge>)}</Badges>}
          </Card>
        ))}
      </CardGrid>
      <EditTagsDialog />
    </Page>
  );
}

function SystemTaskbar() {
  return (
    <Taskbar>
      <Weather>
        <WeatherIcon>
          <SunIcon />
          <CountBadge $bg="#ff99a4" $top={-6} $left={11}>5</CountBadge>
        </WeatherIcon>
        <TwoLines><span>32°C</span><Muted>Haze</Muted></TwoLines>
      </Weather>
      <Apps>
        <AppButton><WindowsIcon /></AppButton>
        <AppButton><TaskViewIcon /></AppButton>
        <AppButton $active><ChromeIcon /><Indicator $active /></AppButton>
        <AppButton><ExplorerIcon /></AppButton>
        <AppButton>
          <FaWhatsapp size={27} color="#25d366" />
          <CountBadge $bg="#4cc2ff" $top={3} $left={20} $pad={3}>74</CountBadge>
        </AppButton>
        <AppButton><FaSpotify size={23} color="#1ed760" /></AppButton>
        <AppButton><VSCodeIcon /><Indicator /></AppButton>
      </Apps>
      <Tray>
        <TrayIcon $width={32}><Chevron up size={13} width={1.400} color="#fff" /></TrayIcon>
        <TrayIcon $width={32}><SyncIcon /></TrayIcon>
        <TrayIcon $width={32}><MicIcon /></TrayIcon>
        <TrayIcon $width={32}><KeyboardIcon /></TrayIcon>
        <Language><TwoLines $align="center"><span>ENG</span><span>US</span></TwoLines></Language>
        <TrayIcon $width={30}><WifiIcon /></TrayIcon>
        <TrayIcon $width={18}><SpeakerIcon /></TrayIcon>
        <TrayIcon $width={30}><BatteryIcon /></TrayIcon>
        <Clock><TwoLines $align="right"><span>2:52 PM</span><span>9/7/2025</span></TwoLines></Clock>
        <BellIcon />
      </Tray>
    </Taskbar>
  );
}

export default function App() {
  return (
    <Screen>
      <GlobalStyle />
      <Browser />
      <NotesPage />
      <SystemTaskbar />
    </Screen>
  );
}
